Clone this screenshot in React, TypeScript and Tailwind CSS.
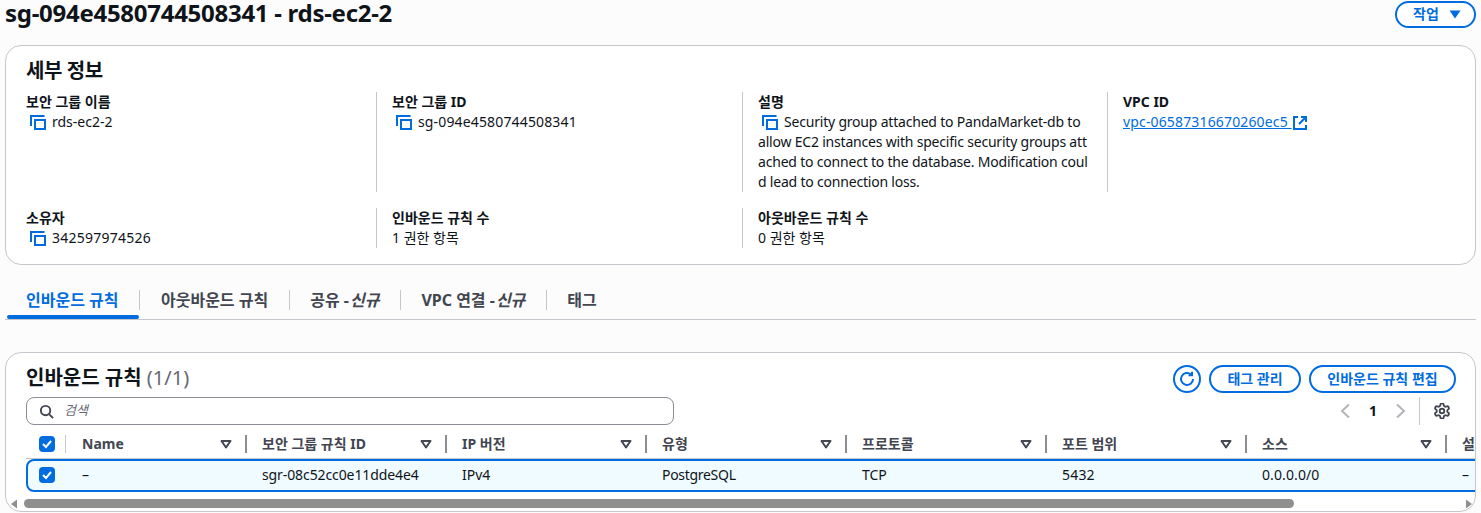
const font = "[font-family:'Noto_Sans','Noto_Sans_CJK_KR',sans-serif]";

function CopyIcon() {
  return (
    <svg viewBox="0 0 16 16" className="h-4 w-4 shrink-0 fill-none stroke-[#006ce0] stroke-2">
      <path d="M1 12V2h13.5" />
      <rect x="5" y="6" width="10" height="9" />
    </svg>
  );
}

function ExternalIcon() {
  return (
    <svg viewBox="0 0 16 16" className="inline h-4 w-4 fill-none stroke-[#006ce0] stroke-2">
      <path d="M6 2H2v12h12v-4" />
      <path d="M9 2h5v5M14 2L7 9" />
    </svg>
  );
}

function SortIcon() {
  return (
    <svg viewBox="0 0 16 16" className="h-4 w-4 shrink-0 fill-none stroke-[#424650] stroke-2">
      <path d="M3.5 5h9L8 11.5z" strokeLinejoin="round" />
    </svg>
  );
}

function Checkbox() {
  return (
    <span className="flex h-4 w-4 items-center justify-center rounded bg-[#006ce0]">
      <svg viewBox="0 0 16 16" className="h-4 w-4 fill-none stroke-white stroke-2">
        <path d="M4 8l3 3 5-6" />
      </svg>
    </span>
  );
}

function Field({ label, children, divider }: { label: string; children: React.ReactNode; divider?: boolean }) {
  return (
    <div className={divider ? "border-r border-[#c6c6cd]" : ""}>
      <div className="text-sm leading-5 font-bold">{label}</div>
      {children}
    </div>
  );
}

function CopyValue({ value, className }: { value: string; className?: string }) {
  return (
    <div className="flex items-center gap-[6px] pl-1 text-sm leading-5">
      <CopyIcon />
      <span className={className}>{value}</span>
    </div>
  );
}

const tabs = [
  { label: "인바운드 규칙", active: true },
  { label: "아웃바운드 규칙" },
  { label: "공유 -", isNew: true },
  { label: "VPC 연결 -", isNew: true },
  { label: "태그" },
];

const columns = [
  { name: "보안 그룹 규칙 ID", value: "sgr-08c52cc0e11dde4e4", cls: "tracking-[-0.1px]" },
  { name: "IP 버전", value: "IPv4", cls: "" },
  { name: "유형", value: "PostgreSQL", cls: "tracking-[-0.3px]" },
  { name: "프로토콜", value: "TCP", cls: "" },
  { name: "포트 범위", value: "5432", cls: "tracking-[0.2px]" },
  { name: "소스", value: "0.0.0.0/0", cls: "tracking-[0.1px]" },
  { name: "설명", value: "–", cls: "" },
];

export default function App() {
  return (
    <div className={`${font} h-[513px] overflow-hidden bg-[#fcfcfc] px-[5px] text-[#0f141a]`}>
      <header className="flex h-[45px] items-start justify-between">
        <h1 className="text-2xl leading-[26px] font-bold tracking-[-0.28px]">sg-094e4580744508341 - rds-ec2-2</h1>
        <button className="mt-px flex h-[27px] w-[81px] items-center gap-[8px] rounded-full border-2 border-[#006ce0] bg-white pb-[2px] pl-4 text-sm font-bold text-[#006ce0]">
          작업
          <svg viewBox="0 0 16 16" className="h-4 w-4 fill-[#006ce0]">
            <path d="M2.5 4.5h11L8 12.5z" />
          </svg>
        </button>
      </header>

      <section className="h-[220px] rounded-2xl border border-[#c6c6cd] bg-white pt-[11px] pl-5">
        <h2 className="h-[35px] text-xl leading-7 font-bold tracking-[-0.4px]">세부 정보</h2>
        <div className="grid grid-cols-[351px_351px_350px_1fr] grid-rows-[100px_40px] gap-x-[15px] gap-y-4">
          <Field label="보안 그룹 이름" divider>
            <CopyValue value="rds-ec2-2" />
          </Field>
          <Field label="보안 그룹 ID" divider>
            <CopyValue value="sg-094e4580744508341" className="tracking-[0.15px]" />
          </Field>
          <Field label="설명" divider>
            <p className="w-[330px] text-sm leading-5 tracking-[-0.2px] break-all">
              <span className="mr-[6px] ml-1 inline-block align-[-3px]">
                <CopyIcon />
              </span>
              Security group attached to PandaMarket-db to allow EC2 instances with specific security groups attached to connect to the database. Modification could lead to connection loss.
            </p>
          </Field>
          <Field label="VPC ID">
            <div className="text-sm leading-5 text-[#006ce0]">
              <span className="tracking-[0.15px] underline">vpc-06587316670260ec5 </span>
              <ExternalIcon />
            </div>
          </Field>
          <Field label="소유자" divider>
            <CopyValue value="342597974526" className="tracking-[0.25px]" />
          </Field>
          <Field label="인바운드 규칙 수" divider>
            <div className="text-sm leading-5">1 권한 항목</div>
          </Field>
          <Field label="아웃바운드 규칙 수">
            <div className="text-sm leading-5">0 권한 항목</div>
          </Field>
        </div>
      </section>

      <nav className="mt-6 flex h-[31px] items-start border-b border-[#c6c6cd]">
        {tabs.map((tab, i) => (
          <div key={tab.label} className="flex items-start">
            {i > 0 && <span className="mt-[1px] h-5 border-l border-[#c6c6cd]" />}
            <div
              className={`relative h-[30px] text-base leading-[22px] font-bold ${
                tab.active ? "px-[21px] text-[#006ce0]" : "px-[20.5px] text-[#424650]"
              }`}
            >
              {tab.label}
              {tab.isNew && <i className="ml-px">신규</i>}
              {tab.active && <span className="absolute right-0 bottom-0 left-[2px] h-1 rounded bg-[#006ce0]" />}
            </div>
          </div>
        ))}
      </nav>

      <section className="mt-8 h-[160px] overflow-hidden rounded-2xl border border-[#c6c6cd] bg-white">
        <div className="flex h-[44px] items-start justify-between pr-[19px] pl-5">
          <h2 className="mt-[11px] text-xl leading-7 font-bold">
            인바운드 규칙 <span className="font-normal text-[#656871]">(1/1)</span>
          </h2>
          <div className="mt-3 flex items-center gap-2">
            <button className="flex h-7 w-7 items-center justify-center rounded-full border-2 border-[#006ce0]">
              <svg viewBox="0 0 16 16" className="h-4 w-4 fill-none stroke-[#006ce0] stroke-2">
                <path d="M14 8a6 6 0 1 1-2-4.5" />
                <path d="M13 0.8v3.4H9.6" />
              </svg>
            </button>
            <button className="h-7 w-[92px] rounded-full border-2 border-[#006ce0] text-sm font-bold text-[#006ce0]">태그 관리</button>
            <button className="h-7 w-[147px] rounded-full border-2 border-[#006ce0] text-sm font-bold text-[#006ce0]">인바운드 규칙 편집</button>
          </div>
        </div>

        <div className="flex h-[36px] items-start justify-between pr-[25px] pl-5">
          <div className="flex h-7 w-[648px] items-center gap-[10px] rounded-lg border border-[#8c8c94] px-3 text-[13px]">
            <svg viewBox="0 0 16 16" className="h-[15px] w-[15px] fill-none stroke-[#424650] stroke-2">
              <circle cx="7" cy="7" r="5" />
              <path d="M11 11l4 4" />
            </svg>
            <i className="text-[#656871]">검색</i>
          </div>
          <div className="flex h-7 items-center">
            <svg viewBox="0 0 16 16" className="h-4 w-4 fill-none stroke-[#b4b4bb] stroke-2">
              <path d="M12 1.5L5 8l7 6.5" />
            </svg>
            <span className="mx-4 w-[8px] text-center text-sm font-bold">1</span>
            <svg viewBox="0 0 16 16" className="h-4 w-4 fill-none stroke-[#b4b4bb] stroke-2">
              <path d="M4 1.5L11 8l-7 6.5" />
            </svg>
            <span className="mr-[14px] ml-[10px] h-7 border-l border-[#c6c6cd]" />
            <svg viewBox="1.5 1.5 21 21" className="h-4 w-4 fill-none stroke-[#424650] stroke-[2.4]" strokeLinejoin="round">
              <path d="M12.22 2h-.44a2 2 0 0 0-2 2v.18a2 2 0 0 1-1 1.73l-.43.25a2 2 0 0 1-2 0l-.15-.08a2 2 0 0 0-2.73.73l-.22.38a2 2 0 0 0 .73 2.73l.15.1a2 2 0 0 1 1 1.72v.51a2 2 0 0 1-1 1.74l-.15.09a2 2 0 0 0-.73 2.73l.22.38a2 2 0 0 0 2.73.73l.15-.08a2 2 0 0 1 2 0l.43.25a2 2 0 0 1 1 1.73V20a2 2 0 0 0 2 2h.44a2 2 0 0 0 2-2v-.18a2 2 0 0 1 1-1.73l.43-.25a2 2 0 0 1 2 0l.15.08a2 2 0 0 0 2.73-.73l.22-.39a2 2 0 0 0-.73-2.73l-.15-.08a2 2 0 0 1-1-1.74v-.5a2 2 0 0 1 1-1.74l.15-.09a2 2 0 0 0 .73-2.73l-.22-.38a2 2 0 0 0-2.73-.73l-.15.08a2 2 0 0 1-2 0l-.43-.25a2 2 0 0 1-1-1.73V4a2 2 0 0 0-2-2z" />
              <circle cx="12" cy="12" r="3" />
            </svg>
          </div>
        </div>

        <div className="overflow-hidden pl-5">
          <div className="flex h-[26px] w-[1500px] items-center border-b border-[#c6c6cd] pb-[3px] text-sm font-bold text-[#424650]">
            <div className="flex w-[39px] shrink-0 items-center pl-[13px]">
              <Checkbox />
            </div>
            <div className="flex w-[180px] shrink-0 items-center pr-[11px]">
              <span className="mr-4 h-[18px] border-l border-[#c6c6cd]" />
              <span className="flex-1">Name</span>
              <SortIcon />
            </div>
            {columns.map((c) => (
              <div key={c.name} className="flex w-[200px] shrink-0 items-center pr-[11px]">
                <span className="mr-[15px] h-[18px] border-l-2 border-[#8c8c94]" />
                <span className="flex-1 whitespace-nowrap">{c.name}</span>
                <SortIcon />
              </div>
            ))}
          </div>
          <div className="flex h-[33px] w-[1500px] items-center rounded-lg border-2 border-[#006ce0] bg-[#f0fbff] pb-px text-sm">
            <div className="w-[37px] shrink-0 pl-[11px]">
              <Checkbox />
            </div>
            <div className="w-[180px] shrink-0 pl-[17px]">–</div>
            {columns.map((c) => (
              <div key={c.name} className={`w-[200px] shrink-0 pl-[17px] ${c.cls}`}>
                {c.value}
              </div>
            ))}
          </div>
        </div>

        <div className="mt-[7px] flex h-[9px] items-center">
          <svg viewBox="0 0 8 10" className="ml-[4px] h-[10px] w-2 fill-[#8f8f8f]">
            <path d="M7 0.5v9L1 5z" />
          </svg>
          <div className="ml-[6px] h-[9px] w-[1270px] rounded-full bg-[#8f8f8f]" />
          <div className="flex-1" />
          <svg viewBox="0 0 8 10" className="mr-[2px] h-[10px] w-2 fill-[#8f8f8f]">
            <path d="M1 0.5v9L7 5z" />
          </svg>
        </div>
      </section>
    </div>
  );
}
